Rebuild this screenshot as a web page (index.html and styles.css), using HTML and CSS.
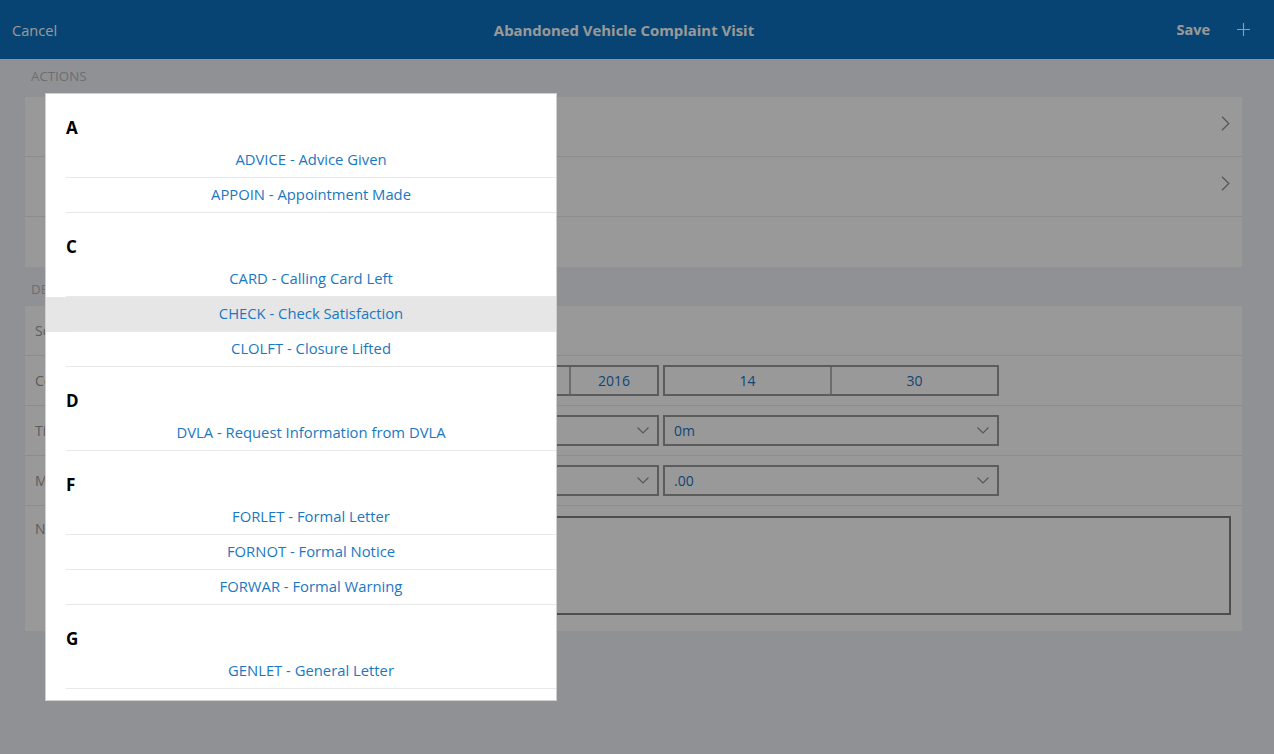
FILE: index.html
```html
<!DOCTYPE html>
<html lang="en">
<head>
<meta charset="utf-8">
<title>Abandoned Vehicle Complaint Visit</title>
<link rel="stylesheet" href="styles.css">
</head>
<body>
<header class="topbar">
  <div class="topbar-left"><span class="cancel">Cancel</span></div>
  <h1 class="title">Abandoned Vehicle Complaint Visit</h1>
  <div class="topbar-right">
    <span class="save">Save</span>
    <svg class="plus" width="13" height="13" viewBox="0 0 13 13"><path d="M6.5 0V13M0 6.5H13" stroke="#fff" stroke-width="1.2" fill="none"/></svg>
  </div>
</header>

<main class="content">
  <div class="section-label">Actions</div>
  <div class="panel">
    <div class="row nav-row"><span class="row-label">Letters</span>
      <svg class="chev" width="9" height="15" viewBox="0 0 9 15"><path d="M1 0.8L7.8 7.5L1 14.2" stroke="#8e8e8e" stroke-width="1.2" fill="none"/></svg>
    </div>
    <div class="row nav-row"><span class="row-label">Photos</span>
      <svg class="chev" width="9" height="15" viewBox="0 0 9 15"><path d="M1 0.8L7.8 7.5L1 14.2" stroke="#8e8e8e" stroke-width="1.2" fill="none"/></svg>
    </div>
    <div class="row nav-row nav-row-last"><span class="row-label">Add</span></div>
  </div>

  <div class="section-label section-label-next">Details</div>
  <div class="panel">
    <div class="field-row"><span class="field-label">Service Request</span><span class="field-value">AV/0412</span></div>
    <div class="field-row"><span class="field-label">Completed</span>
      <div class="box date-box"><span class="cell">14</span><span class="cell">03</span><span class="cell cell-year">2016</span></div>
      <div class="box time-box"><span class="cell">14</span><span class="cell">30</span></div>
    </div>
    <div class="field-row"><span class="field-label">Time Spent</span>
      <div class="box select"><span class="select-value">0h</span><svg class="down" width="12" height="7" viewBox="0 0 12 7"><path d="M0.5 0.5L6 6L11.5 0.5" stroke="#8e8e8e" stroke-width="1.1" fill="none"/></svg></div>
      <div class="box select"><span class="select-value">0m</span><svg class="down" width="12" height="7" viewBox="0 0 12 7"><path d="M0.5 0.5L6 6L11.5 0.5" stroke="#8e8e8e" stroke-width="1.1" fill="none"/></svg></div>
    </div>
    <div class="field-row"><span class="field-label">Mileage</span>
      <div class="box select"><span class="select-value">0</span><svg class="down" width="12" height="7" viewBox="0 0 12 7"><path d="M0.5 0.5L6 6L11.5 0.5" stroke="#8e8e8e" stroke-width="1.1" fill="none"/></svg></div>
      <div class="box select"><span class="select-value">.00</span><svg class="down" width="12" height="7" viewBox="0 0 12 7"><path d="M0.5 0.5L6 6L11.5 0.5" stroke="#8e8e8e" stroke-width="1.1" fill="none"/></svg></div>
    </div>
    <div class="field-row notes-row"><span class="field-label">Notes</span>
      <div class="notes"></div>
    </div>
  </div>
</main>

<div class="overlay"></div>

<div class="picker">
  <div class="group-head">A</div>
  <div class="item"><div class="item-inner">ADVICE - Advice Given</div></div>
  <div class="item"><div class="item-inner">APPOIN - Appointment Made</div></div>
  <div class="group-head">C</div>
  <div class="item"><div class="item-inner">CARD - Calling Card Left</div></div>
  <div class="item is-selected"><div class="item-inner">CHECK - Check Satisfaction</div></div>
  <div class="item"><div class="item-inner">CLOLFT - Closure Lifted</div></div>
  <div class="group-head">D</div>
  <div class="item"><div class="item-inner">DVLA - Request Information from DVLA</div></div>
  <div class="group-head">F</div>
  <div class="item"><div class="item-inner">FORLET - Formal Letter</div></div>
  <div class="item"><div class="item-inner">FORNOT - Formal Notice</div></div>
  <div class="item"><div class="item-inner">FORWAR - Formal Warning</div></div>
  <div class="group-head">G</div>
  <div class="item"><div class="item-inner">GENLET - General Letter</div></div>
</div>
</body>
</html>
```

FILE: styles.css
```css
* { box-sizing: border-box; }

html, body {
  margin: 0;
  padding: 0;
}

body {
  width: 1274px;
  height: 754px;
  overflow: hidden;
  position: relative;
  background: #f0f2f8;
  font-family: "Open Sans", "Noto Sans", "Liberation Sans", sans-serif;
  font-size: 14px;
}

/* Top bar */
.topbar {
  height: 59px;
  background: #0c71c0;
  color: #fff;
  display: grid;
  grid-template-columns: 1fr auto 1fr;
  align-items: center;
  padding: 0 24px 0 12px;
}

.cancel {
  font-size: 14.6px;
}

.title {
  margin: 0;
  padding-right: 14px;
  font-size: 14.9px;
  font-weight: 700;
}

.topbar-right {
  justify-self: end;
  display: flex;
  align-items: center;
  gap: 27px;
}

.save {
  font-size: 14.5px;
  font-weight: 700;
}

/* Content */
.content {
  padding: 0 32px 0 25px;
}

.section-label {
  padding: 7px 6px 11px;
  line-height: 20px;
  font-size: 13.3px;
  text-transform: uppercase;
  color: #b8b8b8;
}

.section-label-next {
  padding: 12px 6px 7px;
}

.panel {
  background: #fff;
}

.row {
  display: flex;
  align-items: center;
  justify-content: space-between;
  padding: 0 12px 0 90px;
  color: #999;
}

.nav-row {
  height: 60px;
  border-bottom: 1px solid #e9e9e9;
}

.nav-row-last {
  height: 50px;
  border-bottom: 0;
}

.chev {
  margin-bottom: 6px;
}

.field-row {
  display: grid;
  grid-template-columns: 285px 335px 336px 1fr;
  column-gap: 4px;
  align-items: center;
  height: 50px;
  padding: 0 11px 0 10px;
  border-bottom: 1px solid #e9e9e9;
  color: #999;
}

.field-label {
  font-size: 14px;
}

.field-value {
  color: #1b74c4;
}

.box {
  height: 31px;
  border: 2px solid #9a9a9a;
  display: flex;
  align-items: center;
  color: #1b74c4;
}

.cell {
  flex: 1 1 0;
  height: 100%;
  display: flex;
  align-items: center;
  justify-content: center;
  border-left: 2px solid #b4b4b4;
}

.cell:first-child {
  border-left: 0;
}

.cell-year {
  flex: 0 0 88px;
}

.select {
  justify-content: space-between;
  padding: 0 8px 0 9px;
}

.notes-row {
  height: 125px;
  align-items: start;
  padding-top: 10px;
  border-bottom: 0;
}

.notes-row .field-label {
  padding-top: 3px;
}

.notes {
  grid-column: 2 / -1;
  height: 99px;
  border: 2px solid #808080;
}

/* Dimming overlay */
.overlay {
  position: absolute;
  inset: 0;
  background: rgba(0, 0, 0, 0.4);
}

/* Picker */
.picker {
  position: absolute;
  left: 45px;
  top: 93px;
  width: 512px;
  height: 608px;
  background: #fff;
  border: 1px solid #cfcfcf;
  overflow: hidden;
}

.group-head {
  height: 49px;
  padding: 24px 20px 5px;
  line-height: 20px;
  font-size: 17px;
  font-weight: 700;
  color: #000;
}

.item {
  padding-left: 20px;
}

.item.is-selected {
  background: #e6e6e6;
}

.item-inner {
  height: 35px;
  line-height: 33px;
  border-bottom: 1px solid #e8e8e8;
  text-align: center;
  font-size: 14.8px;
  color: #1a78c2;
}
```
